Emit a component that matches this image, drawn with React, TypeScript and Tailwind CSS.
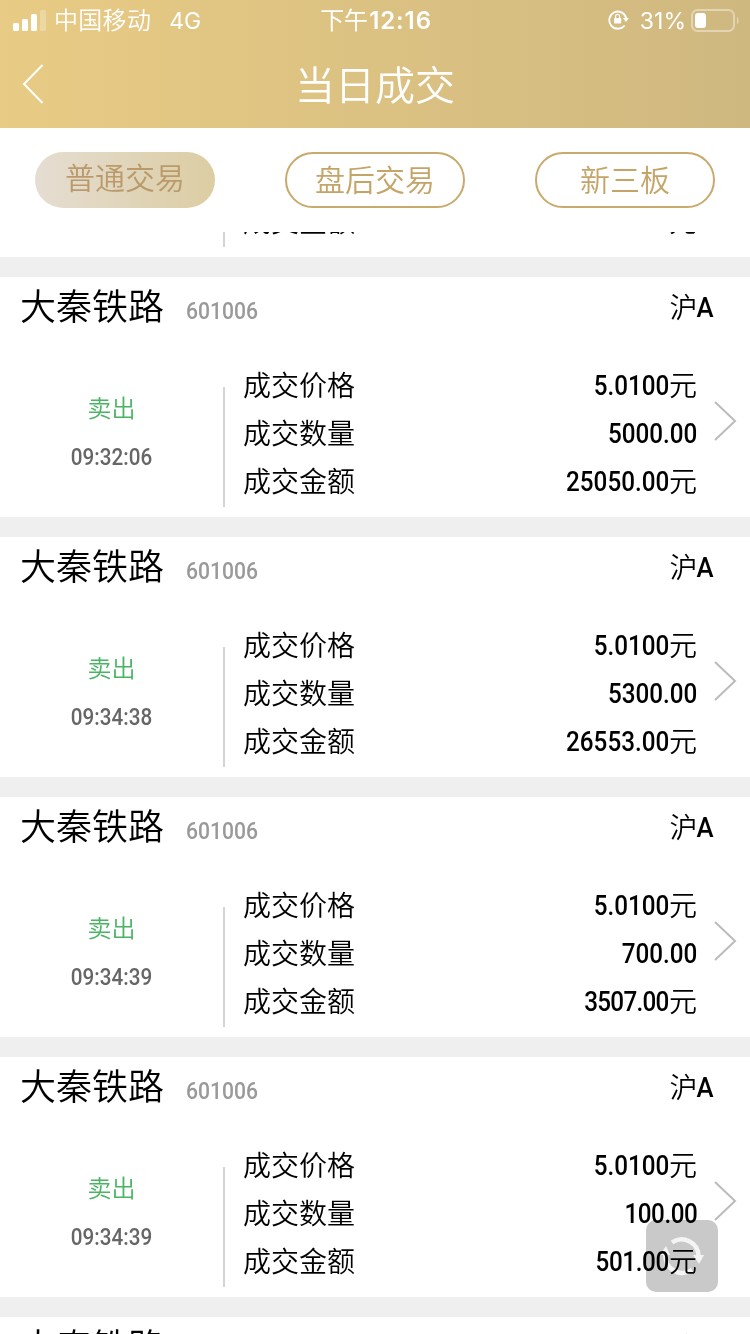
import clsx from 'clsx'

interface Trade {
  id: number
  name: string
  code: string
  market: string
  side: string
  time: string
  price: string
  quantity: string
  amount: string
  quantityClass?: string
  amountClass?: string
}

const trades: Trade[] = [
  { id: 1, name: '大秦铁路', code: '601006', market: '沪A', side: '卖出', time: '09:32:06', price: '5.0100', quantity: '5000.00', amount: '25050.00' },
  { id: 2, name: '大秦铁路', code: '601006', market: '沪A', side: '卖出', time: '09:32:06', price: '5.0100', quantity: '5000.00', amount: '25050.00' },
  { id: 3, name: '大秦铁路', code: '601006', market: '沪A', side: '卖出', time: '09:34:38', price: '5.0100', quantity: '5300.00', amount: '26553.00' },
  { id: 4, name: '大秦铁路', code: '601006', market: '沪A', side: '卖出', time: '09:34:39', price: '5.0100', quantity: '700.00', amount: '3507.00', amountClass: 'tracking-[-0.8px]' },
  { id: 5, name: '大秦铁路', code: '601006', market: '沪A', side: '卖出', time: '09:34:39', price: '5.0100', quantity: '100.00', amount: '501.00', quantityClass: 'tracking-[-0.5px]', amountClass: 'tracking-[-0.4px]' },
  { id: 6, name: '大秦铁路', code: '601006', market: '沪A', side: '卖出', time: '09:34:39', price: '5.0100', quantity: '100.00', amount: '501.00' },
]

const tabs = ['普通交易', '盘后交易', '新三板']

function StatusBar() {
  return (
    <div className="flex h-10 items-center justify-between pr-[11px] pl-[13px] font-['Inter','Noto_Sans_CJK_SC',sans-serif] text-2xl text-white">
      <div className="flex flex-1 items-center">
        <svg width="33" height="21" viewBox="0 0 33 21" fill="#fff">
          <rect x="0" y="13" width="6" height="8" rx="1.5" />
          <rect x="9" y="9" width="6" height="12" rx="1.5" />
          <rect x="18" y="4" width="6" height="17" rx="1.5" />
          <rect x="27" y="0" width="6" height="21" rx="1.5" opacity=".25" />
        </svg>
        <span className="mt-0.5 ml-2 leading-9 font-[350] tracking-[0.3px]">中国移动</span>
        <span className="mt-0.5 ml-[18px] text-[23px]">4G</span>
      </div>
      <div className="flex items-center gap-px whitespace-nowrap">
        <span className="mt-0.5 leading-9">下午</span>
        <span className="mt-0.5 text-2xl leading-9 font-semibold tracking-[0.9px]">12:16</span>
      </div>
      <div className="flex flex-1 items-center justify-end">
        {/* Rotation lock */}
        <svg width="22" height="22" viewBox="0 0 22 22" fill="none" stroke="#fff" strokeWidth="1.8">
          <path d="M16.6 16.5A8.6 8.6 0 1 1 18.2 9" />
          <path d="M15 9h6l-3 4z" fill="#fff" stroke="none" />
          <rect x="6" y="9" width="7.2" height="5.6" rx="0.8" fill="#fff" stroke="none" />
          <path d="M7.6 9.4V7.3a2 2 0 0 1 4 0v2.1" strokeWidth="1.2" />
        </svg>
        <span className="mt-0.5 ml-[10px] text-[23px]">31%</span>
        <svg className="ml-[5px]" width="48" height="23" viewBox="0 0 48 23" fill="none">
          <rect x="1" y="1" width="42" height="21" rx="5.5" stroke="#fff" strokeOpacity=".4" strokeWidth="2" />
          <rect x="4" y="4" width="11" height="15" rx="3" fill="#fff" />
          <path d="M46 8c2.2 1.2 2.2 5.8 0 7z" fill="#fff" fillOpacity=".4" />
        </svg>
      </div>
    </div>
  )
}

function Header() {
  return (
    <header className="h-32 shrink-0 bg-linear-to-r from-[#e8cb84] to-[#cfb880]">
      <StatusBar />
      <div className="grid h-[88px] grid-cols-[60px_1fr_60px] items-center">
        <button type="button" className="pl-[22px]" aria-label="返回">
          <svg width="22" height="40" viewBox="0 0 22 40" fill="none" stroke="#fff" strokeWidth="2">
            <path d="M20.5 1 2 20l18.500 19" />
          </svg>
        </button>
        <h1 className="pb-0.5 text-center text-[40px] leading-[84px] font-[350] text-white">当日成交</h1>
      </div>
    </header>
  )
}

function Row({ label, value, unit, className }: { label: string; value: string; unit?: string; className?: string }) {
  return (
    <div className="flex h-12 items-center justify-between">
      <span className="-mt-1">{label}</span>
      <span className="flex items-center">
        <span className={clsx("inline-block origin-right scale-x-[0.865] font-['Roboto',sans-serif] font-medium", className)}>{value}</span>
        {unit && <span className="-mt-1">{unit}</span>}
      </span>
    </div>
  )
}

function TradeCard({ trade }: { trade: Trade }) {
  return (
    <article className="mb-5 h-60 bg-white text-black">
      <div className="flex h-[85px] justify-between pr-9 pl-5">
        <div className="flex h-[60px] items-center">
          <h2 className="-mt-1.5 text-[36px] font-[350]">{trade.name}</h2>
          <span className="mt-2 ml-[22px] inline-block origin-left scale-x-[0.88] font-['Roboto',sans-serif] text-2xl font-medium text-[#999]">
            {trade.code}
          </span>
        </div>
        <div className="flex h-[60px] items-center text-[28px]">
          <span className="-mt-0.5 font-[350]">{trade.market.slice(0, 1)}</span>
          <span className="mt-0.5 -ml-0.5 inline-block origin-right scale-x-[0.92] font-['Roboto',sans-serif] font-medium">
            {trade.market.slice(1)}
          </span>
        </div>
      </div>
      <div className="flex">
        <div className="flex w-[223px] flex-col pt-[21px] text-center text-2xl leading-[48px]">
          <span className="font-[350] text-[#4bb464]">{trade.side}</span>
          <span className="mt-0.5 scale-x-[0.86] font-['Roboto',sans-serif] font-medium text-[#666]">{trade.time}</span>
        </div>
        <div className="mt-[25px] h-[120px] w-0.5 bg-[#d4d4d4]" />
        <div className="ml-[18px] w-[454px] text-[28px] font-[350]">
          <Row label="成交价格" value={trade.price} unit="元" />
          <Row label="成交数量" value={trade.quantity} className={trade.quantityClass} />
          <Row label="成交金额" value={trade.amount} unit="元" className={trade.amountClass} />
        </div>
        <svg className="mt-[38px] ml-[17px]" width="24" height="42" viewBox="0 0 24 42" fill="none" stroke="#bbb" strokeWidth="2">
          <path d="m1 2 20 19L1 40" />
        </svg>
      </div>
    </article>
  )
}

export default function App() {
  return (
    <div className="relative flex h-[1334px] w-[750px] flex-col overflow-hidden bg-white font-['Noto_Sans_CJK_SC',sans-serif]">
      <Header />
      <nav className="flex h-[104px] shrink-0 items-center justify-between px-[35px]">
        {tabs.map((tab, idx) => (
          <button
            key={tab}
            type="button"
            className={clsx(
              'flex h-14 w-[180px] items-center justify-center rounded-full text-[30px] font-[350]',
              idx === 0
                ? 'bg-linear-to-r from-[#e5ddd2] to-[#dccda2] pb-2 text-[#ba9a6b]'
                : 'border-2 border-[#c8aa6c] pb-1 text-[#c5a468]',
            )}
          >
            {tab}
          </button>
        ))}
      </nav>
      {/* Scrolled trade list */}
      <main className="min-h-0 flex-1 overflow-hidden bg-[#efefef]">
        <div className="-mt-[215px]">
          {trades.map((trade) => (
            <TradeCard key={trade.id} trade={trade} />
          ))}
        </div>
      </main>
      {/* Floating refresh button */}
      <button
        type="button"
        aria-label="刷新"
        className="absolute top-[1220px] left-[646px] flex h-[72px] w-[72px] items-center justify-center rounded-[10px] bg-[#c9c9c9] mix-blend-multiply"
      >
        <svg width="44" height="44" viewBox="0 0 44 44" fill="none" stroke="#f4f4f4" strokeWidth="4.500">
          <path d="M12 8.300A17 17 0 0 1 38.500 22" />
          <path d="M5.500 20A17 17 0 0 0 32 36" />
          <path d="M33 21h11l-5 9zM0 21h10L6 12z" fill="#f4f4f4" stroke="none" />
        </svg>
      </button>
    </div>
  )
}
